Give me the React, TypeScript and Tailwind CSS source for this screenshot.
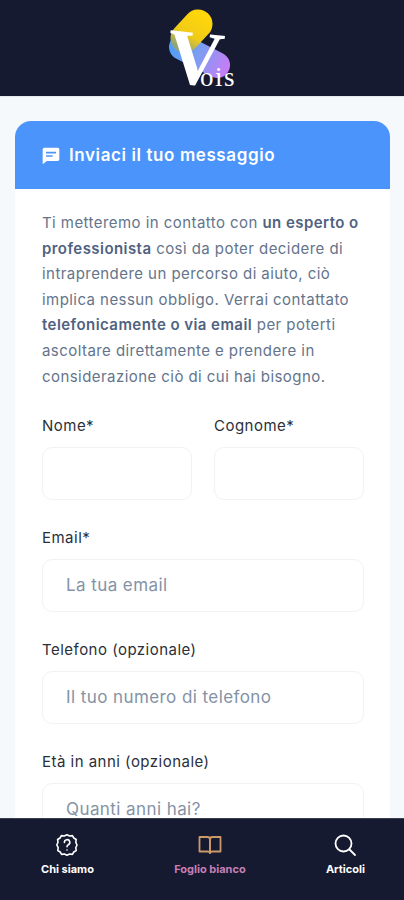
const sans = "font-['Inter','Liberation_Sans',sans-serif]";

function Logo() {
  return (
    <div className="relative w-[80px] h-[96px]">
      <svg width="80" height="96" viewBox="0 0 80 96" className="absolute left-0 top-0">
        <defs>
          <linearGradient id="y" gradientUnits="userSpaceOnUse" x1="38" y1="14" x2="18" y2="48">
            <stop offset="0" stopColor="#ffd60a" />
            <stop offset="0.6" stopColor="#efcb18" />
            <stop offset="1" stopColor="#8fa478" />
          </linearGradient>
          <linearGradient id="b" gradientUnits="userSpaceOnUse" x1="8" y1="45" x2="66" y2="70">
            <stop offset="0" stopColor="#4f9df5" />
            <stop offset="0.5" stopColor="#7f9cf2" />
            <stop offset="1" stopColor="#c87cf6" />
          </linearGradient>
        </defs>
        <line x1="20" y1="47" x2="55" y2="65" stroke="url(#b)" strokeWidth="26" strokeLinecap="round" />
        <line x1="36" y1="24" x2="23" y2="38" stroke="url(#y)" strokeWidth="29" strokeLinecap="round" />
      </svg>
      <span className="absolute left-[5px] top-[19px] rotate-[6deg] font-['Liberation_Serif',serif] font-bold text-[78px] leading-[78px] text-white">V</span>
      <span className="absolute left-[38px] top-[64px] font-['Liberation_Serif',serif] text-[27px] leading-[27px] tracking-[1.5px] text-white">ois</span>
    </div>
  );
}

function Field({ label, placeholder }: { label: string; placeholder?: string }) {
  return (
    <div className="flex flex-col">
      <div className="text-[15px] leading-[24px] tracking-[0.48px] text-[#2a2f3a] h-[22px]">{label}</div>
      <div className="mt-[11px] h-[53px] pt-[1px] rounded-[10px] border border-[#f0f2f5] bg-white flex items-center px-[23px] text-[17px] tracking-[0.42px] text-[#8492a6] whitespace-nowrap">
        {placeholder}
      </div>
    </div>
  );
}

function NavItem({ icon, label, active }: { icon: React.ReactNode; label: string; active?: boolean }) {
  return (
    <div className="flex flex-col items-center">
      {icon}
      <div className={`mt-[5px] text-[11px] leading-[14px] font-bold ${active ? "text-[#c77fb5]" : "text-white"}`}>{label}</div>
    </div>
  );
}

export default function App() {
  return (
    <div className={`h-[900px] w-[404px] flex flex-col overflow-hidden bg-[#f5f9fc] ${sans}`}>
      <header className="h-[97px] shrink-0 bg-[#151a30] flex justify-center items-start border-b border-[#e5e7eb]">
        <Logo />
      </header>
      <main className="flex-1 min-h-0 overflow-hidden pl-[15px] pr-[14px] pt-[24px]">
        <div className="bg-white rounded-t-[16px] h-[800px]">
          <div className="h-[68px] pt-[1px] rounded-t-[16px] bg-[#4a94fb] flex items-center pl-[26px] gap-[8px] text-white">
            <svg width="20" height="20" viewBox="0 0 24 24" fill="currentColor">
              <path fillRule="evenodd" d="M4 2h16a2 2 0 0 1 2 2v12a2 2 0 0 1-2 2H7l-5 4V4a2 2 0 0 1 2-2zm2 5v2h12V7H6zm0 4v2h8v-2H6z" />
            </svg>
            <span className="text-[17px] font-semibold tracking-[0.6px]">Inviaci il tuo messaggio</span>
          </div>
          <div className="pl-[27px] pr-[26px] pt-[21px]">
            <p className="text-[15px] leading-[25.6px] tracking-[0.44px] text-[#64748b]">
              Ti metteremo in contatto con <b className="font-semibold text-[#4f6280]">un esperto o professionista</b> così da poter decidere di intraprendere un percorso di aiuto, ciò implica nessun obbligo. Verrai contattato <b className="font-semibold text-[#4f6280]">telefonicamente o via email</b> per poterti ascoltare direttamente e prendere in considerazione ciò di cui hai bisogno.
            </p>
            <div className="mt-[25px] flex flex-col gap-[26px]">
              <div className="grid grid-cols-2 gap-[22px]">
                <Field label="Nome*" />
                <Field label="Cognome*" />
              </div>
              <Field label="Email*" placeholder="La tua email" />
              <Field label="Telefono (opzionale)" placeholder="Il tuo numero di telefono" />
              <Field label="Età in anni (opzionale)" placeholder="Quanti anni hai?" />
            </div>
          </div>
        </div>
      </main>
      <nav className="h-[82px] shrink-0 bg-[#151a30] border-t border-[#3a3f50] flex justify-between pl-[41px] pr-[39px] pt-[14px]">
        <NavItem
          label="Chi siamo"
          icon={
            <svg width="24" height="24" viewBox="0 0 24 24" fill="none" stroke="white" strokeWidth="1.6" strokeLinecap="round" strokeLinejoin="round">
              <path d="M12 1.8l2.6 1.2 2.8-.4 1.4 2.4 2.4 1.5-.4 2.8 1.2 2.7-1.2 2.7.4 2.8-2.4 1.5-1.4 2.4-2.8-.4-2.6 1.2-2.6-1.2-2.8.4-1.4-2.4-2.4-1.5.4-2.8L1.8 12 3 9.3l-.4-2.8L5 5l1.4-2.4 2.8.4z" />
              <path d="M9.4 9.4a2.7 2.7 0 1 1 3.9 2.4c-.9.5-1.3 1-1.3 2" />
              <path d="M12 17h.01" />
            </svg>
          }
        />
        <NavItem
          active
          label="Foglio bianco"
          icon={
            <svg width="24" height="24" viewBox="0 0 24 24" fill="none" stroke="#cc9a68" strokeWidth="1.8" strokeLinejoin="round">
              <path d="M1.5 4h8c1.5 0 2.5 1 2.5 2.5V20c0-1-1-1.5-2.5-1.5h-8z" />
              <path d="M22.5 4h-8C13 4 12 5 12 6.500V20c0-1 1-1.500 2.500-1.500h8z" />
            </svg>
          }
        />
        <NavItem
          label="Articoli"
          icon={
            <svg width="24" height="24" viewBox="0 0 24 24" fill="none" stroke="white" strokeWidth="1.8" strokeLinecap="round">
              <circle cx="10.500" cy="10.500" r="8" />
              <path d="M16.500 16.500l5.500 5.500" />
            </svg>
          }
        />
      </nav>
    </div>
  );
}
